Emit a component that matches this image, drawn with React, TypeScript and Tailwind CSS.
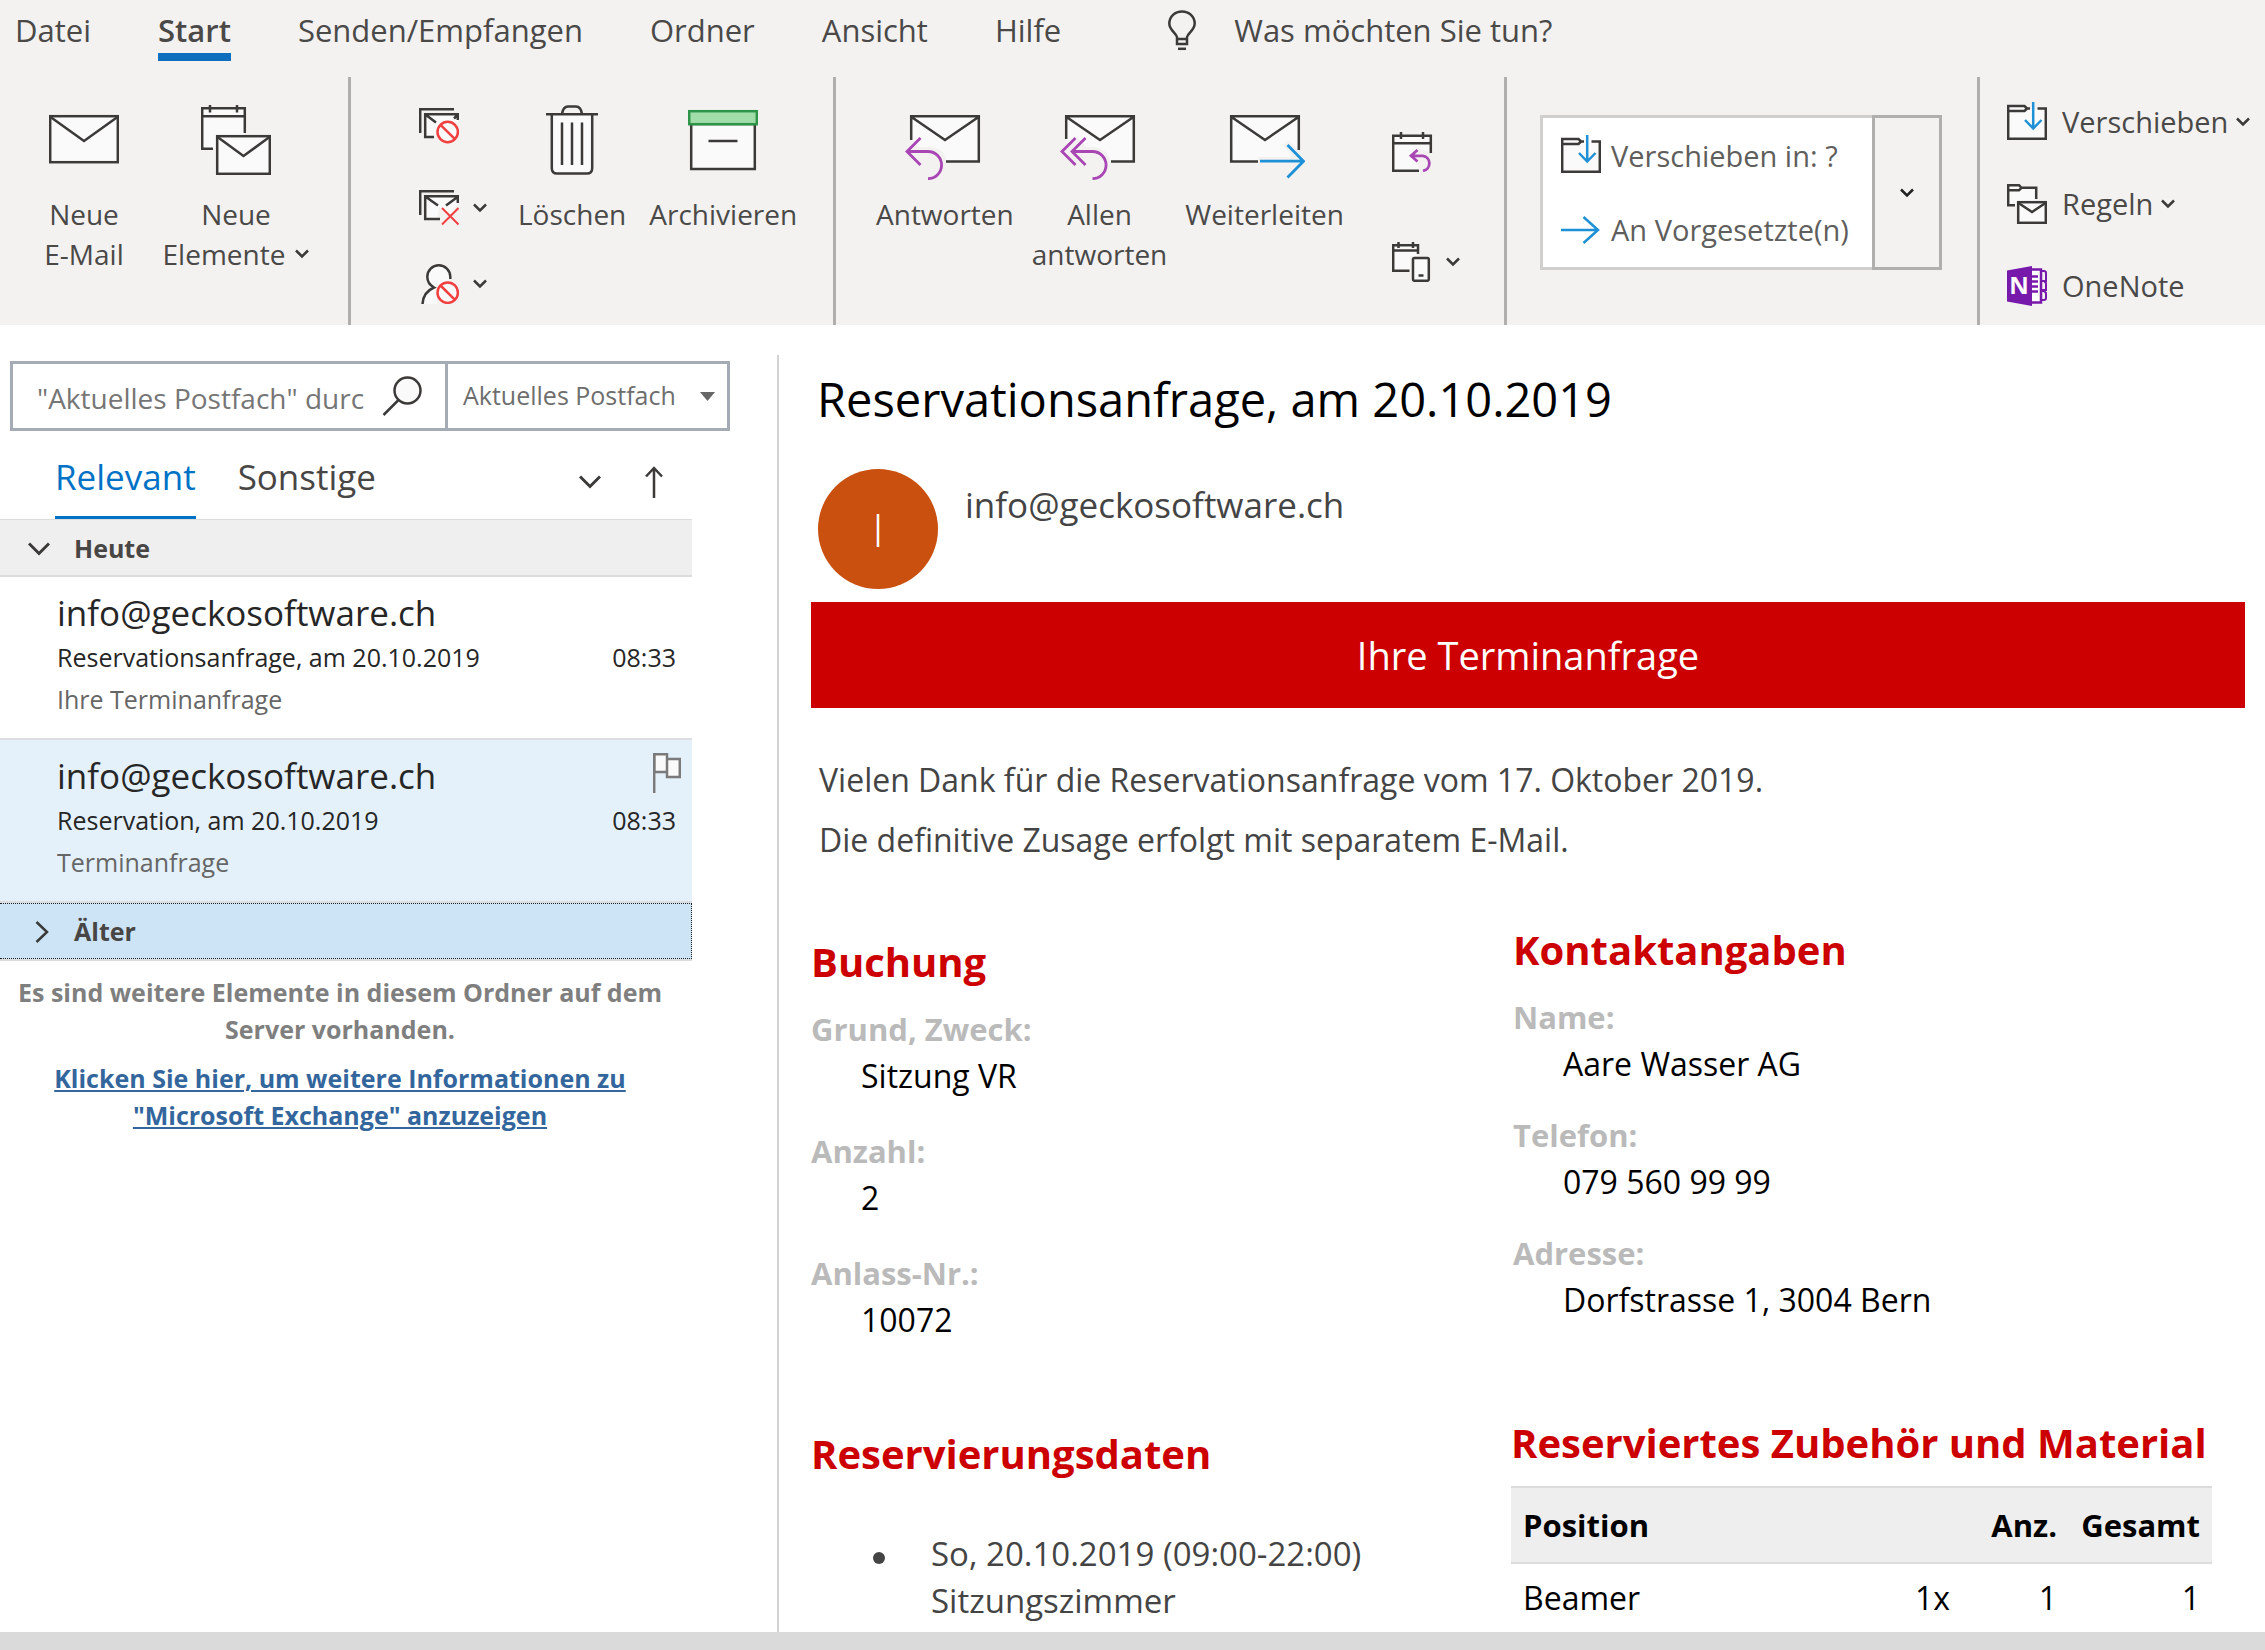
import React from 'react';

const INK = '#3b3a38';
const PAPER = '#fafafa';
const RED = '#f0403f';
const PURPLE = '#a846b4';
const BLUE = '#1e90d6';

interface Mail {
  sender: string;
  subject: string;
  preview: string;
  time: string;
  flagged: boolean;
}

interface Field {
  label: string;
  value: string;
}

const tabs = ['Datei', 'Start', 'Senden/Empfangen', 'Ordner', 'Ansicht', 'Hilfe'];

const mails: Mail[] = [
  {
    sender: 'info@geckosoftware.ch',
    subject: 'Reservationsanfrage, am 20.10.2019',
    preview: 'Ihre Terminanfrage',
    time: '08:33',
    flagged: false,
  },
  {
    sender: 'info@geckosoftware.ch',
    subject: 'Reservation, am 20.10.2019',
    preview: 'Terminanfrage',
    time: '08:33',
    flagged: true,
  },
];

const booking: Field[] = [
  { label: 'Grund, Zweck:', value: 'Sitzung VR' },
  { label: 'Anzahl:', value: '2' },
  { label: 'Anlass-Nr.:', value: '10072' },
];

const contact: Field[] = [
  { label: 'Name:', value: 'Aare Wasser AG' },
  { label: 'Telefon:', value: '079 560 99 99' },
  { label: 'Adresse:', value: 'Dorfstrasse 1, 3004 Bern' },
];

interface IconProps {
  w: number;
  h: number;
  children: React.ReactNode;
}

const Icon: React.FC<IconProps> = ({ w, h, children }) => (
  <svg
    width={w}
    height={h}
    viewBox={`0 0 ${w} ${h}`}
    fill="none"
    stroke={INK}
    strokeWidth={2.5}
    className="shrink-0"
    aria-hidden="true"
  >
    {children}
  </svg>
);

const Chevron: React.FC<{ color?: string }> = ({ color = INK }) => (
  <svg width="14" height="10" viewBox="0 0 14 10" fill="none" stroke={color} strokeWidth={2.5} className="inline-block shrink-0" aria-hidden="true">
    <path d="M1 1.5 L7 7.5 L13 1.5" />
  </svg>
);

const MailIcon = () => (
  <Icon w={70} h={70}>
    <rect x="1.2" y="11.2" width="67.6" height="46" fill={PAPER} />
    <path d="M1.5 12 L35 36 L68.5 12" />
  </Icon>
);

const NewItemsIcon = () => (
  <Icon w={70} h={70}>
    <path d="M1.2 3.2 H43.5 V31 H14 V44 H1.2 Z" fill={PAPER} stroke="none" />
    <path d="M12 43.8 H1.2 V3.2 H43.8 V28 M1 11.2 H44 M9 0 V7.5 M36 0 V7.5" />
    <rect x="16.2" y="31.2" width="52.6" height="37.6" fill={PAPER} />
    <path d="M16.5 32 L42.5 51 L68.5 32" />
  </Icon>
);

const TrashIcon = () => (
  <Icon w={70} h={70}>
    <path d="M14.8 9.5 V63 Q14.8 68.6 20 68.6 H50 Q55.2 68.6 55.2 63 V9.5" fill={PAPER} />
    <path d="M9 9.2 H61 M25 9 Q26 1.4 31 1.4 H39 Q44 1.4 45 9" />
    <path d="M25 17.5 V60 M35 17.5 V60 M45 17.5 V60" />
  </Icon>
);

const ArchiveIcon = () => (
  <Icon w={70} h={70}>
    <rect x="3.2" y="19" width="63.6" height="45" fill={PAPER} />
    <rect x="1.2" y="6.2" width="67.6" height="13" fill="#a1dda9" stroke="#2e9448" />
    <path d="M20.5 36 H49.5" />
  </Icon>
);

const ReplyIcon = () => (
  <Icon w={80} h={80}>
    <path d="M6 11 H74 V57 H41 C42 50 36 43 26 42 H12 V36 H6 Z" fill={PAPER} stroke="none" />
    <path d="M6.2 35 V11.2 H73.8 V56.5 H41 M6.5 12 L40 35 L73.5 12" />
    <path d="M15.5 33 L2 46.5 L15.5 60 M2 46.5 H23 A13.6 13.6 0 0 1 23 73.7" stroke={PURPLE} strokeWidth={2.8} />
  </Icon>
);

const ReplyAllIcon = () => (
  <Icon w={80} h={80}>
    <path d="M6 11 H74 V57 H50 C50 50 44 43 34 42 H26 L20 34 L12 38 H6 Z" fill={PAPER} stroke="none" />
    <path d="M6.2 34 V11.2 H73.8 V56.5 H51 M6.5 12 L40 35 L73.5 12" />
    <path d="M15.5 33 L2 46.5 L15.5 60 M25.5 33 L12 46.5 L25.5 60 M12 46.5 H32.5 A13.6 13.6 0 0 1 32.5 73.7" stroke={PURPLE} strokeWidth={2.8} />
  </Icon>
);

const ForwardIcon = () => (
  <Icon w={80} h={80}>
    <path d="M6 11 H74 V45 L63 35 L58 40 L68 52 H33 V57 H6 Z" fill={PAPER} stroke="none" />
    <path d="M33 56.5 H6.2 V11.2 H73.8 V45 M6.5 12 L40 35 L73.5 12" />
    <path d="M35 56.2 H78 M62.5 40 L78.5 56.2 L62.5 72.5" stroke={BLUE} strokeWidth={2.8} />
  </Icon>
);

// envelope stack with the right-hand part cut out for the blocked sign
const IgnoreIcon = () => (
  <Icon w={40} h={36}>
    <path d="M7 6 H39 V14 L20 17 L16 29 H7 Z" fill={PAPER} stroke="none" />
    <path d="M1.2 25 V1.2 H35 M15 29 H6.2 V6.2 H38.8 V12 M7 7 L17 14.5 M38.5 7 L35 10.5" />
    <Blocked cy={24} />
  </Icon>
);

const Blocked: React.FC<{ cy: number }> = ({ cy }) => (
  <g stroke={RED}>
    <circle cx="28.7" cy={cy} r="10.2" fill={PAPER} />
    <path d={`M21.5 ${cy - 7.2} L36 ${cy + 7.2}`} />
  </g>
);

const CleanupIcon = () => (
  <Icon w={40} h={36}>
    <path d="M7 6 H39 V14 L31 24 L20 17 L18 29 H7 Z" fill={PAPER} stroke="none" />
    <path d="M1.2 25 V1.2 H35 M21 29 H6.2 V6.2 H38.8 V13 M7 7 L19 15.5 M38.5 7 L27 15.5" />
    <path d="M23 18 L39.5 34.5 M39.5 18 L23 34.5" stroke={RED} strokeWidth={2} />
  </Icon>
);

const JunkIcon = () => (
  <Icon w={40} h={40}>
    <path d="M3 40 C3 31 8 26 14 24 C9 20 8 16 9 11 C10 4 14 1.3 20 1.3 C27 1.3 31 6 31 13 L28 18 L18 28 V40 Z" fill={PAPER} stroke="none" />
    <path d="M3.5 40 C4 31 8 26.5 15 23.5 C10.5 21 8.3 17 8.3 12.8 C8.3 6.5 13.5 1.3 19.8 1.3 C26 1.3 31.3 6.5 31.3 12.8 V15" />
    <Blocked cy={28.7} />
  </Icon>
);

const MeetingReplyIcon = () => (
  <Icon w={42} h={40}>
    <path d="M1 3 H39 V20 L28 17 L20 24 L28 38 H1 Z" fill={PAPER} stroke="none" />
    <path d="M27 38.8 H1.2 V3.8 H38.8 V21 M1 11.2 H39 M9 0 V7 M31 0 V7" />
    <path d="M25.5 18 L19 23.8 L25.5 29.5 M19 23.8 H31 A7.6 7.6 0 0 1 31 38.8" stroke={PURPLE} strokeWidth={2.8} />
  </Icon>
);

const MeetingPhoneIcon = () => (
  <Icon w={40} h={40}>
    <path d="M1 3 H26 V14 H18 V29 H1 Z" fill={PAPER} stroke="none" />
    <path d="M17.5 28.8 H1.2 V3.2 H26 V12 M1 8.6 H26 M6.5 0 V6 M21 0 V6" />
    <rect x="21" y="16" width="15.8" height="22.8" rx="1.5" fill={PAPER} />
    <path d="M26.5 33.5 H31.5" />
  </Icon>
);

const FolderMoveIcon = () => (
  <Icon w={40} h={40}>
    <path d="M1 4 H17 L20 7 H39 V37 H1 Z" fill={PAPER} stroke="none" />
    <path d="M23 6.5 H20 L17.5 4 H1.2 V36.8 H38.8 V6.5 H30.5 M1 9 H17.5 L20 6.5" />
    <path d="M26.2 0 V27 M18 18 L26.2 26.5 L34.5 18" stroke={BLUE} />
  </Icon>
);

const RulesIcon = () => (
  <Icon w={40} h={40}>
    <path d="M1 1 H13 L15 4 H29 V17 H9 V22 H1 Z" fill={PAPER} stroke="none" />
    <path d="M8 21.2 H1.2 V1.2 H12 L14.5 3.8 H29.2 V15 M1 6.2 H12 L14.5 3.8" />
    <rect x="11.2" y="18.2" width="27.6" height="20.6" fill={PAPER} />
    <path d="M11.5 19 L25 28 L38.5 19" />
  </Icon>
);

const OneNoteIcon = () => (
  <Icon w={40} h={40}>
    <path d="M25 3.5 H34 V36.5 H25" fill="#fff" stroke="#7719aa" />
    <path d="M33 5 H37 Q39 5 39 7 V15 H34 M34 15 H37 L39 17 V24 H34 M34 25 H37 L39 27 V32 Q39 34 37 34 H34" stroke="#7719aa" strokeWidth={2} />
    <path d="M25 10.5 H31 M25 15.5 H31 M25 20.5 H31 M25 25.5 H31" stroke="#7719aa" />
    <path d="M0 4.5 L25 0 V40 L0 35.5 Z" fill="#7719aa" stroke="none" />
    <text x="12" y="28" textAnchor="middle" fontSize="24" fontWeight="700" fill="#fff" stroke="none" className="font-['Open_Sans',sans-serif]">
      N
    </text>
  </Icon>
);

const RightArrowIcon = () => (
  <Icon w={40} h={28}>
    <path d="M0 14 H37 M22.5 1 L37 14 L22.5 27" stroke={BLUE} />
  </Icon>
);

const BulbIcon = () => (
  <Icon w={28} h={42}>
    <path d="M9 29 V27 C8 23 1.3 20 1.3 13.5 C1.3 6.5 7 1.4 14 1.4 C21 1.4 26.7 6.5 26.7 13.5 C26.7 20 20 23 19 27 V34 H9 V29 H19" />
    <path d="M10 38.8 H18" />
  </Icon>
);

const SearchIcon = () => (
  <Icon w={40} h={40}>
    <circle cx="25.5" cy="14.5" r="13" fill={PAPER} />
    <path d="M16.5 24 L1.5 39" />
  </Icon>
);

const FlagIcon = () => (
  <Icon w={28} h={40}>
    <g stroke="#7a7a7a">
      <path d="M14 6 H26.8 V24 H14 Z M1.2 1.2 H14 V19 H1.2 Z" fill={PAPER} />
      <path d="M1.2 0 V40" />
    </g>
  </Icon>
);

interface BigButtonProps {
  icon: React.ReactNode;
  children: React.ReactNode;
  className?: string;
}

const BigButton: React.FC<BigButtonProps> = ({ icon, children, className = '' }) => (
  <button type="button" className={`flex flex-col items-center pt-7 text-[28px] leading-[40px] ${className}`}>
    <span className="block h-[89px]">{icon}</span>
    <span className="whitespace-nowrap">{children}</span>
  </button>
);

const Ribbon = () => (
  <header className="bg-[#f3f2f1] text-[#4a4948]">
    <nav className="flex h-[61px] gap-[67px] pl-[15px] text-[31px]">
      {tabs.map((tab) => (
        <button
          key={tab}
          type="button"
          className={`border-b-8 pt-[7px] whitespace-nowrap ${tab === 'Start' ? 'border-[#106ebe] font-semibold' : 'border-transparent'}`}
        >
          {tab}
        </button>
      ))}
      <button type="button" className="ml-10 flex items-center gap-[38px] whitespace-nowrap">
        <BulbIcon />
        Was möchten Sie tun?
      </button>
    </nav>

    <div className="flex h-[264px] pt-4">
      <div className="flex w-[351px] shrink-0 gap-4 border-r-[3px] border-[#b1afad] pl-7">
        <BigButton icon={<MailIcon />} className="w-[112px]">
          Neue
          <br />
          E-Mail
        </BigButton>
        <BigButton icon={<NewItemsIcon />} className="w-[160px]">
          Neue
          <br />
          <span className="flex items-center gap-[10px]">
            Elemente <Chevron />
          </span>
        </BigButton>
      </div>

      <div className="flex w-[485px] shrink-0 border-r-[3px] border-[#b1afad] pl-[68px]">
        <div className="flex w-[99px] flex-col items-start gap-[38px] pt-[31px]">
          <button type="button" aria-label="Ignorieren" className="mb-2">
            <IgnoreIcon />
          </button>
          <button type="button" aria-label="Aufräumen" className="flex items-center gap-[14px]">
            <CleanupIcon />
            <Chevron />
          </button>
          <button type="button" aria-label="Junk-E-Mail" className="flex items-center gap-[14px]">
            <JunkIcon />
            <Chevron />
          </button>
        </div>
        <BigButton icon={<TrashIcon />} className="mr-[23px]">
          Löschen
        </BigButton>
        <BigButton icon={<ArchiveIcon />}>Archivieren</BigButton>
      </div>

      <div className="flex w-[671px] shrink-0 border-r-[3px] border-[#b1afad] pl-10">
        <div className="flex gap-[18px]">
          <BigButton icon={<ReplyIcon />}>Antworten</BigButton>
          <BigButton icon={<ReplyAllIcon />}>
            Allen
            <br />
            antworten
          </BigButton>
          <BigButton icon={<ForwardIcon />}>Weiterleiten</BigButton>
        </div>
        <div className="ml-12 flex flex-col items-start gap-[70px] pt-[55px]">
          <button type="button" aria-label="Besprechung">
            <MeetingReplyIcon />
          </button>
          <button type="button" aria-label="Weitere Antworten" className="flex items-center gap-[14px]">
            <MeetingPhoneIcon />
            <Chevron />
          </button>
        </div>
      </div>

      <div className="w-[473px] shrink-0 border-r-[3px] border-[#b1afad] pt-[38px] pl-[33px] text-[29px] text-[#605e5c]">
        <div className="flex h-[155px] w-[402px]">
          <div className="flex flex-1 flex-col border-[3px] border-r-0 border-[#d0cfce] bg-white pl-[18px]">
            <button type="button" className="flex flex-1 items-center gap-[10px] whitespace-nowrap">
              <FolderMoveIcon />
              Verschieben in: ?
            </button>
            <button type="button" className="flex flex-1 items-center gap-[10px] whitespace-nowrap">
              <RightArrowIcon />
              An Vorgesetzte(n)
            </button>
          </div>
          <button type="button" aria-label="Mehr QuickSteps" className="flex w-[70px] items-center justify-center border-[3px] border-[#b1afad]">
            <Chevron color="#222" />
          </button>
        </div>
      </div>

      <div className="flex flex-1 flex-col items-start gap-[42px] pt-[25px] pl-[27px] text-[29px] leading-[40px]">
        <button type="button" className="flex items-center gap-[15px]">
          <FolderMoveIcon />
          <span className="flex items-center gap-2">
            Verschieben <Chevron />
          </span>
        </button>
        <button type="button" className="flex items-center gap-[15px]">
          <RulesIcon />
          <span className="flex items-center gap-2">
            Regeln <Chevron />
          </span>
        </button>
        <button type="button" className="flex items-center gap-[15px]">
          <OneNoteIcon />
          OneNote
        </button>
      </div>
    </div>
  </header>
);

const MailItem: React.FC<{ mail: Mail }> = ({ mail }) => (
  <li className={`border-b-2 border-[#dcdde0] pt-[13px] pb-[18px] pl-[57px] ${mail.flagged ? 'bg-[#e5f1fa]' : 'bg-white'}`}>
    <div className="flex justify-between pr-[11px] text-[35px] leading-[46px] text-[#262626]">
      {mail.sender}
      {mail.flagged && <FlagIcon />}
    </div>
    <div className="flex justify-between pr-4 text-[25px] leading-[42px] text-[#262626]">
      <span>{mail.subject}</span>
      <time>{mail.time}</time>
    </div>
    <p className="text-[25px] leading-[42px] text-[#666]">{mail.preview}</p>
  </li>
);

const MailList = () => (
  <aside className="w-[779px] shrink-0 border-r-2 border-[#d2d2d2] pt-[6px]">
    <div className="ml-[10px] flex h-[70px] w-[720px] border-[3px] border-[#a5abb5] text-[#6e6e6e]">
      <label className="flex w-[435px] items-center border-r-[3px] border-[#a5abb5] pl-[24px]">
        <input
          type="text"
          aria-label="Suche"
          placeholder={'"Aktuelles Postfach" durchsuchen'}
          className="mt-1 mr-[18px] w-[327px] text-[28px] outline-none placeholder:text-[#767676]"
        />
        <SearchIcon />
      </label>
      <div className="relative flex-1">
        <select aria-label="Suchbereich" className="h-full w-full appearance-none pl-[15px] text-[25px]">
          <option>Aktuelles Postfach</option>
        </select>
        <svg width="15" height="9" viewBox="0 0 15 9" className="pointer-events-none absolute top-[28px] right-3" aria-hidden="true">
          <path d="M0 0 H15 L7.5 9 Z" fill="#666" />
        </svg>
      </div>
    </div>

    <div className="w-[692px]">
      <div className="flex h-[88px] gap-[42px] pr-[29px] pl-[55px] text-[35px] text-[#484644]">
        <button type="button" className="border-b-[3px] border-[#0072c6] pt-2 text-[#0072c6]">
          Relevant
        </button>
        <button type="button" className="border-b-[3px] border-transparent pt-2">
          Sonstige
        </button>
        <div className="ml-auto flex items-center gap-11 pt-[14px]">
          <button type="button" aria-label="Filter">
            <Icon w={22} h={14}>
              <path d="M1 1.5 L11 11.5 L21 1.5" strokeWidth={3} />
            </Icon>
          </button>
          <button type="button" aria-label="Sortieren">
            <Icon w={18} h={32}>
              <path d="M9 32 V2 M1 10.5 L9 2 L17 10.5" />
            </Icon>
          </button>
        </div>
      </div>

      <button
        type="button"
        className="flex h-[58px] w-full items-center gap-[24px] border-t border-b-2 border-[#dcdcdc] bg-[#efefef] pt-[2px] pl-[28px] text-[25px] font-bold text-[#484644]"
      >
        <Icon w={22} h={14}>
          <path d="M1 1.5 L11 11.5 L21 1.5" strokeWidth={3} />
        </Icon>
        Heute
      </button>
      <ul>
        {mails.map((mail) => (
          <MailItem key={mail.subject} mail={mail} />
        ))}
      </ul>
      <div className="border-b-2 border-[#dcdcdc]">
        <button
          type="button"
          className="flex h-[56px] w-full items-center gap-[24px] border border-l-0 border-dotted border-[#222] bg-[#cde4f7] pt-[2px] pl-[35px] text-[25px] font-bold text-[#484644]"
        >
          <Icon w={15} h={22}>
            <path d="M1.5 1 L12 11 L1.5 21" />
          </Icon>
          Älter
        </button>
      </div>
      <div className="w-[680px] px-[10px] pt-[13px] text-center text-[25px] leading-[37px] font-bold">
        <p className="text-[#7f7f7f]">Es sind weitere Elemente in diesem Ordner auf dem Server vorhanden.</p>
        <a href="#" className="mt-3 block text-[#33669c] underline decoration-2 underline-offset-2">
          Klicken Sie hier, um weitere Informationen zu "Microsoft Exchange" anzuzeigen
        </a>
      </div>
    </div>
  </aside>
);

const SectionTitle: React.FC<{ children: React.ReactNode }> = ({ children }) => (
  <h2 className="text-[40px] leading-[60px] font-bold whitespace-nowrap text-[#cc0000]">{children}</h2>
);

const FieldList: React.FC<{ fields: Field[]; className: string }> = ({ fields, className }) => (
  <dl className={`mt-[14px] flex flex-col ${className}`}>
    {fields.map((field) => (
      <div key={field.label}>
        <dt className="text-[31px] leading-[46px] font-bold text-[#bababa]">{field.label}</dt>
        <dd className="pl-[50px] text-[32px] leading-[48px] text-black">{field.value}</dd>
      </div>
    ))}
  </dl>
);

const ReadingPane = () => (
  <main className="min-w-0 flex-1 pt-[14px] pr-5 pl-8 text-[#444]">
    <h1 className="pl-[6px] text-[47px] leading-[60px] text-black">Reservationsanfrage, am 20.10.2019</h1>
    <div className="mt-10 flex gap-[27px] pl-[7px]">
      <div className="flex size-[120px] items-center justify-center rounded-full bg-[#ca5010] text-[46px] font-light text-white">I</div>
      <span className="pt-3 text-[35px] leading-[48px]">info@geckosoftware.ch</span>
    </div>
    <div className="mt-[13px] flex h-[106px] items-center justify-center bg-[#cc0000] text-[38px] text-white">Ihre Terminanfrage</div>
    <div className="mt-[42px] pl-2 text-[32px] leading-[60px]">
      <p>Vielen Dank für die Reservationsanfrage vom 17. Oktober 2019.</p>
      <p>Die definitive Zusage erfolgt mit separatem E-Mail.</p>
    </div>

    <div className="grid grid-cols-[700fr_734fr]">
      <div className="pt-[62px]">
        <SectionTitle>Buchung</SectionTitle>
        <FieldList fields={booking} className="mb-20 gap-7" />
        <SectionTitle>Reservierungsdaten</SectionTitle>
        <ul className="mt-[46px] pl-[62px] text-[33px] leading-[47px]">
          <li className="flex gap-[46px]">
            <span className="mt-[22px] size-3 shrink-0 rounded-full bg-[#444]" />
            <span>
              So, 20.10.2019 (09:00-22:00)
              <br />
              Sitzungszimmer
            </span>
          </li>
        </ul>
      </div>

      <div className="pt-[50px]">
        <div className="pl-[2px]">
          <SectionTitle>Kontaktangaben</SectionTitle>
          <FieldList fields={contact} className="mb-[89px] gap-6" />
        </div>
        <SectionTitle>Reserviertes Zubehör und Material</SectionTitle>
        <table className="mt-[13px] w-[701px] table-fixed text-right text-[32px] text-black">
          <thead>
            <tr className="h-[76px] border-y-2 border-[#dcdcdc] bg-[#eee] text-[31px]">
              <th className="pl-[12px] text-left">Position</th>
              <td className="w-[100px]" />
              <th className="w-[107px]">Anz.</th>
              <th className="w-[155px] pr-3">Gesamt</th>
            </tr>
          </thead>
          <tbody>
            <tr className="h-[68px]">
              <td className="pl-[12px] text-left">Beamer</td>
              <td>1x</td>
              <td>1</td>
              <td className="pr-3">1</td>
            </tr>
          </tbody>
        </table>
      </div>
    </div>
  </main>
);

const App: React.FC = () => {
  return (
    <div className="flex min-h-screen flex-col bg-white font-['Open_Sans',sans-serif]">
      <Ribbon />
      <div className="mt-[30px] flex flex-1">
        <MailList />
        <ReadingPane />
      </div>
      <footer className="h-[18px] bg-[#dadada]" />
    </div>
  );
};

export default App;
